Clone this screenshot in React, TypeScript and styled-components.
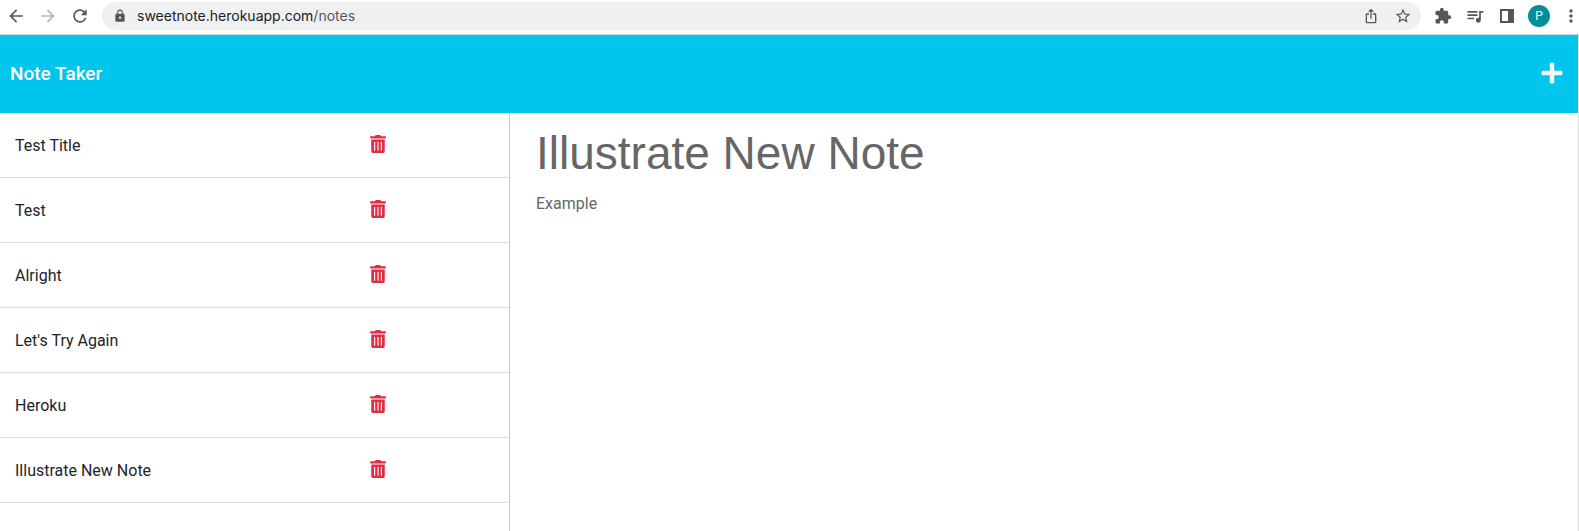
import React from "react";
import styled, { createGlobalStyle } from "styled-components";
import {
  MdArrowBack,
  MdArrowForward,
  MdExtension,
  MdIosShare,
  MdLock,
  MdMoreVert,
  MdQueueMusic,
  MdRefresh,
  MdStarBorder,
} from "react-icons/md";
import { FaPlus, FaTrashAlt } from "react-icons/fa";

const GlobalStyle = createGlobalStyle`
  *, *::before, *::after { box-sizing: border-box; }
  body {
    margin: 0;
    background: #fff;
    color: #212529;
    font: 16px/24px Roboto, "Liberation Sans", sans-serif;
  }
`;

const Page = styled.div`
  display: flex;
  flex-direction: column;
  min-height: 100vh;
`;

const BrowserBar = styled.div`
  display: flex;
  align-items: center;
  gap: 10px;
  height: 35px;
  padding: 0 0 3px 5px;
  border-bottom: 1px solid #d5d7da;
  overflow: hidden;
`;

const IconButton = styled.button`
  display: flex;
  flex: none;
  align-items: center;
  justify-content: center;
  width: 22px;
  height: 28px;
  padding: 0;
  border: 0;
  background: none;
  color: #54575c;
  cursor: pointer;

  &:disabled {
    color: #b5b7ba;
  }
`;

const MenuButton = styled(IconButton)`
  width: 16px;
  margin-left: 3px;

  svg {
    flex: none;
  }
`;

const AddressBar = styled.div`
  display: flex;
  flex: 1;
  align-items: center;
  gap: 10px;
  height: 28px;
  margin: 0 1px;
  padding: 0 7px 0 11px;
  border-radius: 14px;
  background: #eff0f2;
  color: #54575c;
`;

const Url = styled.div`
  flex: 1;
  font-family: Inter, "Liberation Sans", sans-serif;
  font-size: 14px;
  line-height: 20px;
`;

const Host = styled.span`
  color: #202124;
`;

const Avatar = styled.button`
  flex: none;
  width: 22px;
  height: 22px;
  padding: 0;
  border: 0;
  border-radius: 50%;
  background: #058e98;
  color: #fff;
  font: 12px/22px Roboto, "Liberation Sans", sans-serif;
`;

const Site = styled.div`
  display: flex;
  flex: 1;
  flex-direction: column;
  border-right: 1px solid #e0e0e0;
`;

const Header = styled.header`
  display: flex;
  align-items: center;
  justify-content: space-between;
  height: 78px;
  padding: 0 14px 0 10px;
  background: #00c5ec;
`;

const Brand = styled.a`
  color: #fff;
  font-size: 19px;
  font-weight: 500;
  line-height: 30px;
  text-decoration: none;
`;

const AddButton = styled.button`
  display: flex;
  padding: 0 0 3px;
  border: 0;
  background: none;
  color: #f8f9fa;
  cursor: pointer;
`;

const Columns = styled.div`
  display: flex;
  flex: 1;
`;

const Sidebar = styled.aside`
  width: calc(100% / 3 - 16px);
  border-right: 1px solid #ccc;
`;

const NoteList = styled.ul`
  margin: 0;
  padding: 0;
  list-style: none;
`;

const NoteRow = styled.li`
  display: flex;
  align-items: center;
  height: 65px;
  padding: 0 2px 0 15px;
  border-bottom: 1px solid #dcdcdc;

  &:last-child {
    border-bottom-right-radius: 4px;
  }
`;

const NoteTitle = styled.span`
  flex: 1;
  padding-top: 2px;
`;

const DeleteButton = styled.button`
  display: flex;
  width: 28%;
  padding: 0 0 2px;
  border: 0;
  background: none;
  color: #e12d42;
  cursor: pointer;
`;

const NoteView = styled.main`
  flex: 1;
  padding: 10px 26px;
  color: #666;
`;

const NoteHeading = styled.h1`
  margin: 0 0 9px;
  font-family: "Liberation Sans", Arial, sans-serif;
  font-size: 46px;
  font-weight: 400;
  line-height: 60px;
`;

const NoteText = styled.p`
  margin: 0;
`;

const notes = ["Test Title", "Test", "Alright", "Let's Try Again", "Heroku", "Illustrate New Note"];

export default function App() {
  return (
    <Page>
      <GlobalStyle />
      <BrowserBar>
        <IconButton aria-label="Back"><MdArrowBack size={20} /></IconButton>
        <IconButton aria-label="Forward" disabled><MdArrowForward size={20} /></IconButton>
        <IconButton aria-label="Reload"><MdRefresh size={20} /></IconButton>
        <AddressBar>
          <MdLock size={14} />
          <Url><Host>sweetnote.herokuapp.com</Host>/notes</Url>
          <IconButton aria-label="Share"><MdIosShare size={16} /></IconButton>
          <IconButton aria-label="Bookmark"><MdStarBorder size={18} /></IconButton>
        </AddressBar>
        <IconButton aria-label="Extensions"><MdExtension size={18} /></IconButton>
        <IconButton aria-label="Media"><MdQueueMusic size={20} /></IconButton>
        <IconButton aria-label="Side panel">
          <svg width="14" height="14" viewBox="0 0 14 14" fill="currentColor" aria-hidden="true">
            <path fillRule="evenodd" d="M0 0h14v14H0zM2 2v10h6V2z" />
          </svg>
        </IconButton>
        <Avatar aria-label="Profile">P</Avatar>
        <MenuButton aria-label="Menu"><MdMoreVert size={20} /></MenuButton>
      </BrowserBar>
      <Site>
        <Header>
          <Brand href="/">Note Taker</Brand>
          <AddButton aria-label="New note">
            <FaPlus size={24} />
          </AddButton>
        </Header>
        <Columns>
          <Sidebar>
            <NoteList>
              {notes.map((note) => (
                <NoteRow key={note}>
                  <NoteTitle>{note}</NoteTitle>
                  <DeleteButton aria-label={`Delete ${note}`}><FaTrashAlt size={18} /></DeleteButton>
                </NoteRow>
              ))}
            </NoteList>
          </Sidebar>
          <NoteView>
            <NoteHeading>Illustrate New Note</NoteHeading>
            <NoteText>Example</NoteText>
          </NoteView>
        </Columns>
      </Site>
    </Page>
  );
}
